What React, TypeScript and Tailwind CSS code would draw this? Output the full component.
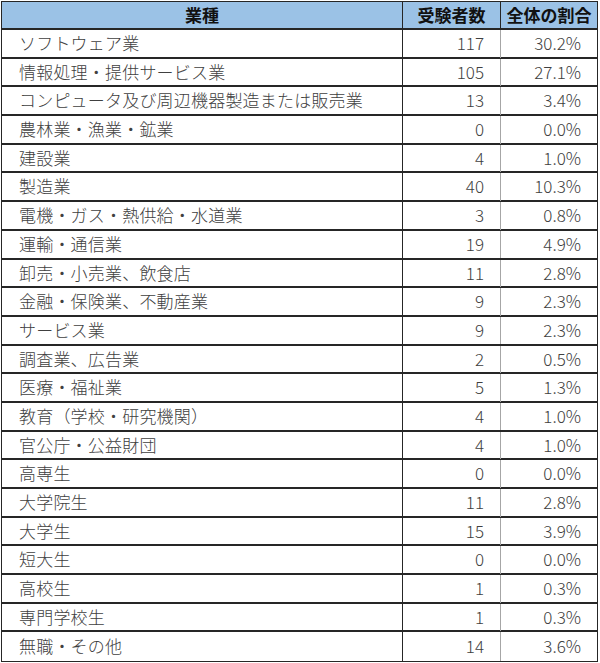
const rows: [string, number, string][] = [
  ["ソフトウェア業", 117, "30.2%"],
  ["情報処理・提供サービス業", 105, "27.1%"],
  ["コンピュータ及び周辺機器製造または販売業", 13, "3.4%"],
  ["農林業・漁業・鉱業", 0, "0.0%"],
  ["建設業", 4, "1.0%"],
  ["製造業", 40, "10.3%"],
  ["電機・ガス・熱供給・水道業", 3, "0.8%"],
  ["運輸・通信業", 19, "4.9%"],
  ["卸売・小売業、飲食店", 11, "2.8%"],
  ["金融・保険業、不動産業", 9, "2.3%"],
  ["サービス業", 9, "2.3%"],
  ["調査業、広告業", 2, "0.5%"],
  ["医療・福祉業", 5, "1.3%"],
  ["教育（学校・研究機関）", 4, "1.0%"],
  ["官公庁・公益財団", 4, "1.0%"],
  ["高専生", 0, "0.0%"],
  ["大学院生", 11, "2.8%"],
  ["大学生", 15, "3.9%"],
  ["短大生", 0, "0.0%"],
  ["高校生", 1, "0.3%"],
  ["専門学校生", 1, "0.3%"],
  ["無職・その他", 14, "3.6%"],
];

export default function App() {
  return (
    <div className="w-[600px] h-[663px] bg-white pt-[1px] pl-[1px] font-['Noto_Sans_CJK_JP',sans-serif] text-[17px]">
      <div className="w-[597px] border border-[#262626]">
        {/* header */}
        <div className="grid grid-cols-[401px_98px_1fr] h-[28px] bg-[#9bc2e6] border-b-2 border-[#262626] font-bold text-[#111]">
          <div className="flex items-center justify-center pb-[2px] border-r border-[#262626]">業種</div>
          <div className="flex items-center justify-center pb-[2px] border-r border-[#262626]">受験者数</div>
          <div className="flex items-center justify-center pb-[2px]">全体の割合</div>
        </div>
        {rows.map(([name, count, pct], i) => (
          <div
            key={name}
            className={
              "grid grid-cols-[401px_98px_1fr] h-[28.7px] font-light text-[#404040] " +
              (i < rows.length - 1 ? "border-b-2 border-[#262626]" : "")
            }
          >
            <div className="flex items-center pb-[2px] pl-[17px] tracking-[0.2px] border-r border-[#262626]">{name}</div>
            <div className="flex items-center justify-end pb-[2px] pr-[16px] border-r border-[#a6a6a6]">{count}</div>
            <div className="flex items-center justify-end pb-[2px] pr-[16px]">{pct}</div>
          </div>
        ))}
      </div>
    </div>
  );
}
